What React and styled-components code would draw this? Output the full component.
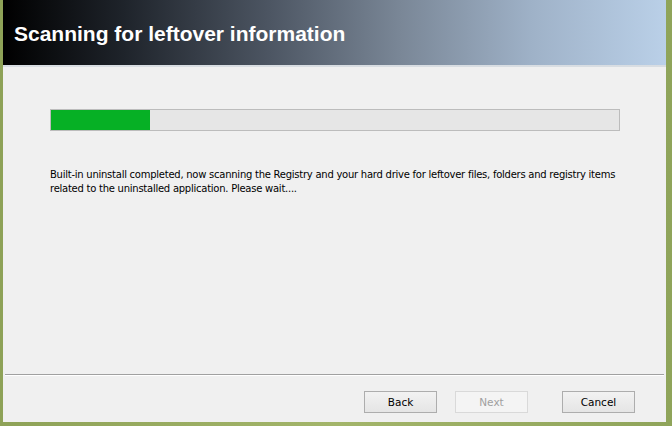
import React from 'react'
import styled, {createGlobalStyle} from 'styled-components'

const GlobalStyle = createGlobalStyle`
  html, body {
    margin: 0;
    padding: 0;
    width: 672px;
    height: 426px;
    overflow: hidden;
    background: #97aa5c;
  }
`

const progress = 17.5

export default function App() {
  return (
    <>
      <GlobalStyle />
      <Frame>
        <Window>
          <Banner>
            <BannerTitle>Scanning for leftover information</BannerTitle>
          </Banner>
          <Content>
            <Track>
              <Fill style={{width: `${progress}%`}} />
            </Track>
            <Message>
              Built-in uninstall completed, now scanning the Registry and your hard drive for leftover files, folders and registry items
              <br />
              related to the uninstalled application. Please wait....
            </Message>
          </Content>
          <Footer>
            <Button>Back</Button>
            <Button disabled>Next</Button>
            <Button $gap>Cancel</Button>
          </Footer>
        </Window>
      </Frame>
    </>
  )
}

const Frame = styled.div`
  width: 672px;
  height: 426px;
  box-sizing: border-box;
  padding: 0 6px 4px 3px;
  background: linear-gradient(90deg, #8ea257, #a3b56a 50%, #8fa45a);
  display: flex;
`

const Window = styled.div`
  flex: 1;
  display: flex;
  flex-direction: column;
  background: #f0f0f0;
  font-family: Tahoma, "DejaVu Sans", sans-serif;
`

const Banner = styled.header`
  height: 65px;
  flex: none;
  display: flex;
  align-items: center;
  padding-left: 11px;
  background: linear-gradient(90deg, #000000 0%, #1e232a 18%, #4c5562 40%, #7a8797 60%, #9fb2c8 80%, #bad0e8 100%);
  border-bottom: 2px solid #d8dde2;
`

const BannerTitle = styled.h1`
  margin: 2px 0 0;
  color: #ffffff;
  font-family: "Liberation Sans", Arial, sans-serif;
  font-weight: bold;
  font-size: 21px;
`

const Content = styled.main`
  flex: 1;
  padding: 42px 46px 0 47px;
`

const Track = styled.div`
  height: 20px;
  border: 1px solid #bcbcbc;
  background: #e6e6e6;
  display: flex;
`

const Fill = styled.div`
  background: #06b025;
  height: 100%;
`

const Message = styled.p`
  margin: 37px 0 0;
  font-family: "DejaVu Sans", sans-serif;
  font-size: 10px;
  line-height: 14px;
  color: #000;
  letter-spacing: -0.25px;
  white-space: nowrap;
`

const Footer = styled.footer`
  box-sizing: border-box;
  flex: none;
  height: 48px;
  margin: 0 2px;
  border-top: 1px solid #a0a0a0;
  box-shadow: inset 0 1px 0 #ffffff;
  display: flex;
  align-items: flex-start;
  padding: 16px 29px 0 0;
  justify-content: flex-end;
  gap: 18px;
`

const Button = styled.button`
  width: 73px;
  height: 22px;
  margin-left: ${p => (p.$gap ? '16px' : '0')};
  border: 1px solid #adadad;
  background: linear-gradient(#f2f2f2, #e5e5e5);
  font-family: "DejaVu Sans", sans-serif;
  font-size: 10.5px;
  color: #000;
  padding: 0;

  &:disabled {
    border-color: #d9d9d9;
    background: #f4f4f4;
    color: #a0a0a0;
  }
`
